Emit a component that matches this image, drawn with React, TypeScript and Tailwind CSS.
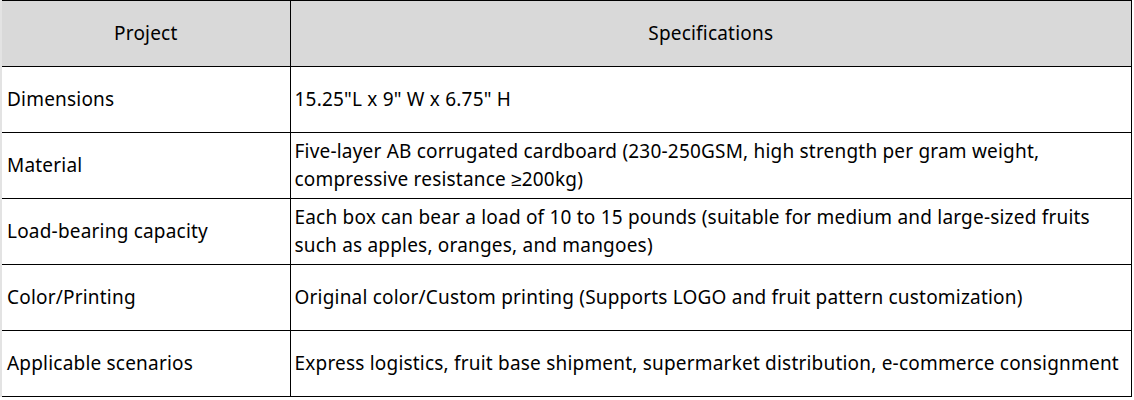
const rows: { project: string; spec: string }[] = [
  { project: 'Dimensions', spec: '15.25"L x 9" W x 6.75" H' },
  {
    project: 'Material',
    spec: 'Five-layer AB corrugated cardboard (230-250GSM, high strength per gram weight, compressive resistance ≥200kg)',
  },
  {
    project: 'Load-bearing capacity',
    spec: 'Each box can bear a load of 10 to 15 pounds (suitable for medium and large-sized fruits such as apples, oranges, and mangoes)',
  },
  {
    project: 'Color/Printing',
    spec: 'Original color/Custom printing (Supports LOGO and fruit pattern customization)',
  },
  {
    project: 'Applicable scenarios',
    spec: 'Express logistics, fruit base shipment, supermarket distribution, e-commerce consignment',
  },
];

export default function App() {
  return (
    <div className="bg-white" style={{ fontFamily: '"Noto Sans", sans-serif' }}>
      <table className="w-[1132px] table-fixed border-collapse text-[19px] leading-[28px] tracking-[0.2px] text-black">
        <colgroup>
          <col className="w-[289px]" />
          <col />
        </colgroup>
        <thead>
          <tr className="h-[66px] bg-[#d9d9d9]">
            <th className="border-t border-r border-b border-l-2 border-black border-l-[#e3e3e3] px-[5px] pb-[2px] text-center font-normal">
              Project
            </th>
            <th className="border border-black px-[5px] pb-[2px] text-center font-normal">Specifications</th>
          </tr>
        </thead>
        <tbody>
          {rows.map((row) => (
            <tr key={row.project} className="h-[66px]">
              <td className="border-t border-r border-b border-l-2 border-black border-l-[#e3e3e3] px-[5px] pb-[2px] align-middle">
                {row.project}
              </td>
              <td className="border border-black px-[4px] pb-[2px] align-middle">{row.spec}</td>
            </tr>
          ))}
        </tbody>
      </table>
    </div>
  );
}
